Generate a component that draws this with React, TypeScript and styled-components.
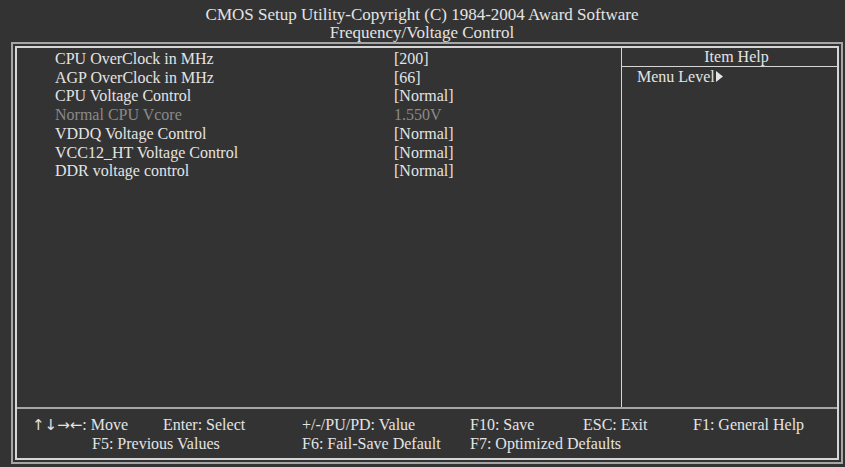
import React from 'react';
import styled, { createGlobalStyle } from 'styled-components';

const GlobalStyle = createGlobalStyle`
  html, body {
    margin: 0;
    padding: 0;
    background: #333333;
  }
  body {
    font-family: "Liberation Serif", "Times New Roman", serif;
    color: #e4e4e4;
  }
`;

const items = [
  { label: 'CPU OverClock in MHz', value: '[200]' },
  { label: 'AGP OverClock in MHz', value: '[66]' },
  { label: 'CPU Voltage Control', value: '[Normal]' },
  { label: 'Normal CPU Vcore', value: '1.550V', disabled: true },
  { label: 'VDDQ Voltage Control', value: '[Normal]' },
  { label: 'VCC12_HT Voltage Control', value: '[Normal]' },
  { label: 'DDR voltage control', value: '[Normal]' },
];

const App = () => {
  return (
    <Screen>
      <GlobalStyle />
      <Title>
        <TitleLine>CMOS Setup Utility-Copyright (C) 1984-2004 Award Software</TitleLine>
        <TitleLine>Frequency/Voltage Control</TitleLine>
      </Title>
      <OuterFrame>
        <InnerFrame>
          <Main>
            <ItemList>
              {items.map((item) => (
                <Row key={item.label} $disabled={item.disabled}>
                  <Label>{item.label}</Label>
                  <Value>{item.value}</Value>
                </Row>
              ))}
            </ItemList>
            <HelpPanel>
              <HelpHeader>Item Help</HelpHeader>
              <HelpBody>
                Menu Level
                <svg width="7" height="11" viewBox="0 0 7 11">
                  <path d="M0 0 L7 5.5 L0 11 Z" fill="#e4e4e4" />
                </svg>
              </HelpBody>
            </HelpPanel>
          </Main>
          <Footer>
            <FooterItem>
              <Arrows>↑↓→←</Arrows>: Move
            </FooterItem>
            <FooterItem>Enter: Select</FooterItem>
            <FooterItem>+/-/PU/PD: Value</FooterItem>
            <FooterItem>F10: Save</FooterItem>
            <FooterItem>ESC: Exit</FooterItem>
            <FooterItem>F1: General Help</FooterItem>
            <FooterItem $span={2} $indent={60}>F5: Previous Values</FooterItem>
            <FooterItem>F6: Fail-Save Default</FooterItem>
            <FooterItem $span={3}>F7: Optimized Defaults</FooterItem>
          </Footer>
        </InnerFrame>
      </OuterFrame>
    </Screen>
  );
};

export default App;

const Screen = styled.div`
  width: 845px;
  height: 467px;
  display: flex;
  flex-direction: column;
  box-sizing: border-box;
  padding: 6px 1px 0 11px;
`;

const Title = styled.div`
  display: flex;
  flex-direction: column;
  align-items: center;
  margin-left: -11px;
  height: 36px;
`;

const TitleLine = styled.div`
  font-size: 17px;
  line-height: 18px;
  white-space: nowrap;
`;

const OuterFrame = styled.div`
  width: 832px;
  height: 422px;
  box-sizing: border-box;
  border: 2px solid #a6a6a6;
  padding: 2px;
`;

const InnerFrame = styled.div`
  height: 100%;
  box-sizing: border-box;
  border: 2px solid #d6d6d6;
  display: flex;
  flex-direction: column;
`;

const Main = styled.div`
  flex: 1;
  display: flex;
  border-bottom: 2px solid #a6a6a6;
`;

const ItemList = styled.div`
  width: 605px;
  box-sizing: border-box;
  padding: 2px 0 0 38px;
  border-right: 1px solid #d6d6d6;
`;

const Row = styled.div<{ $disabled?: boolean }>`
  display: flex;
  font-size: 16px;
  line-height: 18.7px;
  color: ${(p) => (p.$disabled ? '#8a8a8a' : '#e4e4e4')};
  white-space: nowrap;
`;

const Label = styled.div`
  width: 339px;
`;

const Value = styled.div``;

const HelpPanel = styled.div`
  flex: 1;
  display: flex;
  flex-direction: column;
`;

const HelpHeader = styled.div`
  font-size: 16px;
  line-height: 18px;
  height: 18px;
  text-align: center;
  padding-left: 14px;
  border-bottom: 1px solid #d6d6d6;
`;

const HelpBody = styled.div`
  font-size: 16px;
  line-height: 18.7px;
  padding: 1px 0 0 15px;
  display: flex;
  align-items: center;
  gap: 1px;

  svg {
    margin-top: -2px;
  }
`;

const Footer = styled.div`
  height: 49px;
  box-sizing: border-box;
  padding: 7px 0 0 15px;
  display: grid;
  grid-template-columns: 131px 139px 168px 113px 110px auto;
  grid-auto-rows: 18.5px;
  align-content: start;
`;

const FooterItem = styled.div<{ $span?: number; $indent?: number }>`
  font-size: 16px;
  line-height: 18.5px;
  white-space: nowrap;
  grid-column: span ${(p) => p.$span ?? 1};
  padding-left: ${(p) => p.$indent ?? 0}px;
`;

const Arrows = styled.span`
  font-family: "DejaVu Sans", sans-serif;
  font-size: 15px;
`;
